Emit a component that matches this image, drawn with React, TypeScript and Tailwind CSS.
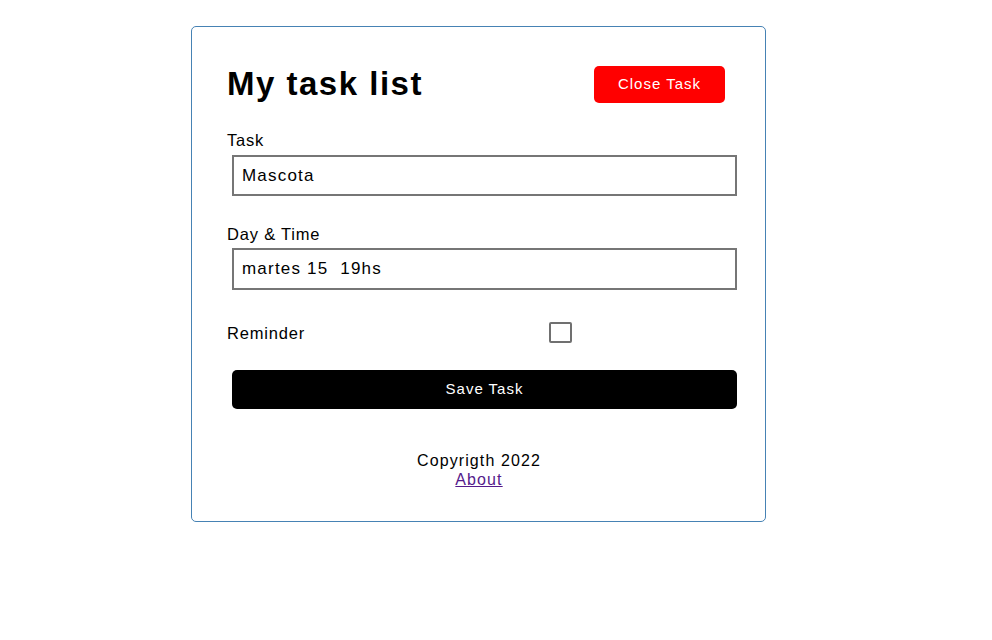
import React, { useState } from 'react';

const App: React.FC = () => {
  const [text, setText] = useState('Mascota');
  const [day, setDay] = useState('martes 15  19hs');
  const [reminder, setReminder] = useState(false);

  return (
    <div className="min-h-screen bg-white pt-[26px] font-['Liberation_Sans',Arial,sans-serif] text-black">
      <div className="ml-[191px] h-[496px] w-[575px] rounded-[5px] border border-[#4682b4] pl-[35px] pr-[28px] pt-[37px]">
        {/* header */}
        <header className="flex items-start justify-between">
          <h1 className="mt-[1px] text-[33px] leading-[37px] font-bold tracking-[1.5px]">My task list</h1>
          <button
            type="button"
            className="mr-[12px] mt-[2px] flex h-[37px] w-[131px] items-center justify-center rounded-[5px] bg-[#ff0000] text-[15px] tracking-[1px] text-white"
          >
            Close Task
          </button>
        </header>

        <form onSubmit={(e) => e.preventDefault()}>
          <div className="mt-[27px]">
            <label htmlFor="task" className="block text-[16.5px] leading-[20px] tracking-[0.8px]">
              Task
            </label>
            <input
              id="task"
              type="text"
              value={text}
              onChange={(e) => setText(e.target.value)}
              className="ml-[5px] mt-[5px] block h-[41px] w-[505px] border-2 border-[#767676] px-[8px] text-[17px] tracking-[1.2px] outline-none"
            />
          </div>
          <div className="mt-[28px]">
            <label htmlFor="day" className="block text-[16.5px] leading-[20px] tracking-[0.8px]">
              Day &amp; Time
            </label>
            <input
              id="day"
              type="text"
              value={day}
              onChange={(e) => setDay(e.target.value)}
              className="ml-[5px] mt-[4px] block h-[42px] w-[505px] border-2 border-[#767676] px-[8px] text-[17px] tracking-[1.2px] outline-none"
            />
          </div>
          <div className="mt-[32px] flex items-center">
            <label htmlFor="reminder" className="w-[322px] text-[16.5px] leading-[20px] tracking-[0.8px]">
              Reminder
            </label>
            <input
              id="reminder"
              type="checkbox"
              checked={reminder}
              onChange={(e) => setReminder(e.target.checked)}
              className="h-[21px] w-[23px] appearance-none rounded-[2px] border-2 border-[#707070] bg-white checked:bg-[#0075ff]"
            />
          </div>
          <button
            type="submit"
            className="ml-[5px] mt-[27px] flex h-[39px] w-[505px] items-center justify-center rounded-[5px] bg-black text-[15px] tracking-[1px] text-white"
          >
            Save Task
          </button>
        </form>

        <footer className="mt-[42px] pr-[6px] text-center text-[16px] leading-[19px] tracking-[1.1px]">
          <p>Copyrigth 2022</p>
          <a href="#about" className="text-[#551a8b] underline">
            About
          </a>
        </footer>
      </div>
    </div>
  );
};

export default App;
